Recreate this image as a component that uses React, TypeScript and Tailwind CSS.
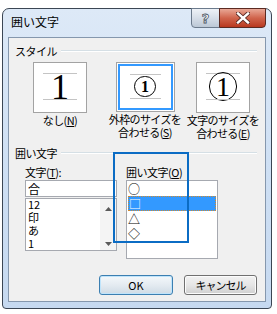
import React from 'react';

function GroupHeader({ label, className = '' }: { label: string; className?: string }) {
  return (
    <div className={`flex items-center h-[14px] pl-[6px] pr-[8px] ${className}`}>
      <span className="leading-[14px] tracking-[-0.5px]">{label}</span>
      <div className="flex-1 ml-[4px] border-t border-[#d5dfe5] border-b border-b-white" />
    </div>
  );
}

function GuideLine({ w }: { w: string }) {
  return <div className={`h-px bg-[#c4c4c4] ${w}`} />;
}

function StyleColumn({ children, lines }: { children: React.ReactNode; lines: React.ReactNode }) {
  return (
    <div className="w-[76px] flex flex-col items-center">
      {children}
      <div className="mt-[1px] text-center leading-[13px] tracking-[-0.6px] whitespace-nowrap">{lines}</div>
    </div>
  );
}

export default function App() {
  return (
    <div className="w-[277px] h-[314px] bg-white pt-[8px] pl-[2px] font-['Noto_Sans_CJK_JP',sans-serif] text-[11px] text-black">
      <div className="w-[270px] h-[301px] rounded-t-[7px] rounded-b-[4px] border border-[#3b4654] bg-gradient-to-b from-[#dde9f7] via-[#cfe0f4] to-[#c6d9f0] flex flex-col">
        {/* title bar */}
        <div className="h-[28px] flex items-start justify-between pr-[5px]">
          <div className="pl-[8px] pt-[5px] text-[12px] leading-[16px]">囲い文字</div>
          <div className="flex -mt-px">
            <div className="w-[29px] h-[20px] border border-[#6b7a8c] rounded-bl-[4px] bg-gradient-to-b from-[#eef2f7] via-[#d6dee8] to-[#bcc8d6] flex items-center justify-center">
              <span className="text-[13px] font-bold leading-none text-white [-webkit-text-stroke:0.8px_#4a5563] font-['DejaVu_Sans',sans-serif]">?</span>
            </div>
            <div className="w-[47px] h-[20px] -ml-px border border-[#5b2a22] rounded-br-[4px] bg-gradient-to-b from-[#e8a796] via-[#d0644c] to-[#b8381f] flex items-center justify-center">
              <svg width="14" height="12" viewBox="0 0 14 12">
                <path d="M2 1.5 L12 10.5 M12 1.5 L2 10.5" stroke="#5a2a24" strokeWidth="4.2" strokeLinecap="square" />
                <path d="M2 1.5 L12 10.5 M12 1.5 L2 10.5" stroke="#ffffff" strokeWidth="2.4" strokeLinecap="square" />
              </svg>
            </div>
          </div>
        </div>

        {/* client area */}
        <div className="mx-[5px] h-[265px] border border-[#8597ad] bg-[#f0f0f0] relative flex flex-col">
          <GroupHeader label="スタイル" className="mt-[6px]" />

          <div className="flex items-start mt-[4px] pl-[13px]">
            <StyleColumn
              lines={
                <>
                  なし(<span className="underline">N</span>)
                </>
              }
            >
              <div className="w-[54px] h-[51px] border border-[#a3a3a3] bg-white flex flex-col items-center pt-[10px]">
                <GuideLine w="w-[34px]" />
                <div className="h-[25px] flex items-center justify-center font-['Liberation_Serif',serif] text-[36px] leading-none">1</div>
                <GuideLine w="w-[34px]" />
              </div>
            </StyleColumn>

            <div className="ml-[9px]">
              <StyleColumn
                lines={
                  <>
                    外枠のサイズを
                    <br />
                    合わせる(<span className="underline">S</span>)
                  </>
                }
              >
                <div className="w-[59px] h-[50px] border border-[#a3a3a3] bg-white p-px">
                  <div className="w-full h-full border-2 border-[#3399ff] flex flex-col items-center pt-[8px]">
                    <GuideLine w="w-[31px]" />
                    <div className="h-[23px] flex items-center justify-center">
                      <div className="w-[22px] h-[21px] rounded-full border-[1.5px] border-black flex items-center justify-center font-['Liberation_Serif',serif] font-bold text-[16px] leading-none">1</div>
                    </div>
                    <GuideLine w="w-[31px]" />
                  </div>
                </div>
              </StyleColumn>
            </div>

            <div className="ml-[2px]">
              <StyleColumn
                lines={
                  <>
                    文字のサイズを
                    <br />
                    合わせる(<span className="underline">E</span>)
                  </>
                }
              >
                <div className="w-[54px] h-[51px] border border-[#a3a3a3] bg-white flex flex-col items-center pt-[10px]">
                  <GuideLine w="w-[34px]" />
                  <div className="h-[25px] flex items-center justify-center">
                    <div className="w-[28px] h-[29px] -my-[2px] rounded-full border-[1.5px] border-black flex items-center justify-center font-['Liberation_Serif',serif] text-[28px] leading-none">1</div>
                  </div>
                  <GuideLine w="w-[34px]" />
                </div>
              </StyleColumn>
            </div>
          </div>

          <GroupHeader label="囲い文字" className="mt-[6px]" />

          <div className="flex items-start mt-[5px] pl-[16px]">
            {/* 文字 */}
            <div className="w-[92px] flex flex-col">
              <div className="h-[14px] leading-[14px] tracking-[-0.5px]">
                文字(<span className="underline">T</span>):
              </div>
              <div className="mt-[1px] h-[17px] border border-[#a6a9b0] bg-white pl-[2px] text-[12px] leading-[15px]">合</div>
              <div className="mt-px h-[53px] border border-[#a6a9b0] bg-white flex">
                <div className="flex-1 pl-[2px] text-[11px] leading-[13px]">
                  <div className="-mt-[1px]">12</div>
                  <div>印</div>
                  <div>あ</div>
                  <div>1</div>
                </div>
                <div className="w-[16px] bg-[#f4f4f4] flex flex-col items-center justify-between pt-[8px] pb-[4px]">
                  <svg width="7" height="4" viewBox="0 0 7 4">
                    <path d="M0 4 L3.5 0 L7 4 Z" fill="#5a5a5a" />
                  </svg>
                  <svg width="7" height="4" viewBox="0 0 7 4">
                    <path d="M0 0 L3.5 4 L7 0 Z" fill="#5a5a5a" />
                  </svg>
                </div>
              </div>
            </div>

            {/* 囲い文字 */}
            <div className="ml-[9px] w-[92px] flex flex-col">
              <div className="h-[14px] leading-[14px] tracking-[-0.5px]">
                囲い文字(<span className="underline">O</span>)
              </div>
              <div className="mt-[1px] h-[79px] border border-[#a6a9b0] bg-white flex flex-col text-[12px] leading-[12px]">
                <div className="h-[15px] pl-[1px] flex items-center">○</div>
                <div className="h-[15px] mx-px bg-[#3399ff] border border-dotted border-[#d08a30] text-white flex items-center">□</div>
                <div className="h-[15px] pl-[1px] flex items-center">△</div>
                <div className="h-[15px] pl-[1px] flex items-center">◇</div>
              </div>
            </div>
          </div>

          <div className="flex justify-end gap-[11px] pr-[8px] mt-[16px]">
            <div className="w-[74px] h-[20px] rounded-[3px] border border-[#3c7fb1] bg-gradient-to-b from-[#f4f8fb] via-[#e4ebf1] to-[#cfdbe5] shadow-[inset_0_0_0_1px_#bfe4fb] flex items-center justify-center leading-none">
              OK
            </div>
            <div className="w-[73px] h-[20px] rounded-[3px] border border-[#707070] bg-gradient-to-b from-[#f2f2f2] via-[#e6e6e6] to-[#d0d0d0] shadow-[inset_0_0_0_1px_#fcfcfc] flex items-center justify-center leading-none tracking-[-1px]">
              キャンセル
            </div>
          </div>

          {/* highlight annotation */}
          <div className="absolute left-[104px] top-[114px] w-[76px] h-[91px] border-2 border-[#0b6cc4]" />
        </div>
      </div>
    </div>
  );
}
